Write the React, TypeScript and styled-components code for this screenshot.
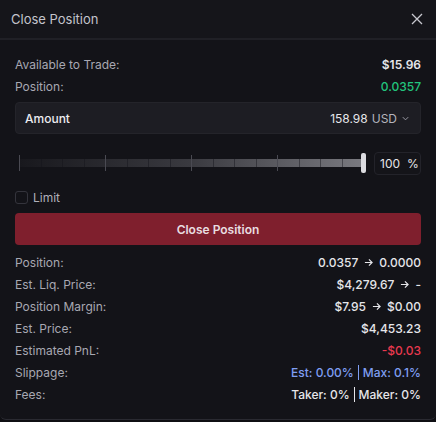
import React from 'react';
import styled, { createGlobalStyle } from 'styled-components';

const GlobalStyle = createGlobalStyle`
  html, body {
    margin: 0;
    padding: 0;
    background: #0f0f13;
  }
  * {
    box-sizing: border-box;
  }
`;

const Modal = styled.div`
  width: 436px;
  height: 420px;
  background: #131318;
  border-bottom: 1px solid #2a2a31;
  border-radius: 0 0 6px 6px;
  font-family: Inter, 'Noto Sans', sans-serif;
  font-size: 12px;
  color: #e4e4e8;
  display: flex;
  flex-direction: column;
`;

const Header = styled.div`
  height: 40px;
  padding: 0 11px 0 11px;
  display: flex;
  align-items: center;
  justify-content: space-between;
  background: #15151a;
  border-bottom: 2px solid #202026;
`;

const Title = styled.span`
  font-size: 13px;
  color: #c4c4cc;
`;

const CloseButton = styled.button`
  width: 16px;
  height: 16px;
  padding: 0;
  border: none;
  background: none;
  display: flex;
  align-items: center;
  justify-content: center;
  color: #c8c8cf;
`;

const Body = styled.div`
  padding: 13px 15px 0 15px;
  display: flex;
  flex-direction: column;
`;

const InfoRow = styled.div`
  height: 22px;
  display: flex;
  align-items: center;
  justify-content: space-between;
`;

const Label = styled.span`
  color: #a8a8b2;
`;

const Value = styled.span<{ $tone?: 'green' | 'red' | 'blue'; $strong?: boolean }>`
  display: flex;
  align-items: center;
  gap: 6px;
  font-weight: ${({ $strong }) => ($strong ? 600 : 500)};
  color: ${({ $tone }) =>
    $tone === 'green' ? '#22c47c' : $tone === 'red' ? '#e8394f' : $tone === 'blue' ? '#7f9ef2' : '#e6e6ea'};
`;

const Divider = styled.span`
  width: 1px;
  height: 15px;
  margin: 0 -2px;
  background: currentColor;
`;

const AmountBox = styled.div`
  margin-top: 5px;
  height: 32px;
  padding: 0 10px 0 9px;
  display: flex;
  align-items: center;
  justify-content: space-between;
  background: #1d1d23;
  border: 1px solid #24242a;
  border-radius: 4px;
`;

const AmountLabel = styled.span`
  font-size: 12px;
  font-weight: 500;
  color: #ececf0;
`;

const AmountValue = styled.span`
  display: flex;
  align-items: center;
  gap: 4px;
  color: #e6e6ea;
`;

const Unit = styled.span`
  color: #b4b4bc;
`;

const SliderRow = styled.div`
  margin-top: 17px;
  height: 24px;
  display: flex;
  align-items: center;
  gap: 11px;
`;

const Track = styled.div`
  position: relative;
  flex: 1;
  margin-left: 4px;
  height: 8px;
  background: linear-gradient(90deg, #18181d 0%, #3a3a40 50%, #7a7a80 100%);
`;

const Tick = styled.span<{ $major?: boolean }>`
  position: absolute;
  top: ${({ $major }) => ($major ? '-4px' : '0')};
  width: 1px;
  height: ${({ $major }) => ($major ? '16px' : '8px')};
  background: ${({ $major }) => ($major ? '#4a4a52' : 'rgba(20,20,26,0.45)')};
`;

const Thumb = styled.span`
  position: absolute;
  right: -3px;
  top: -6px;
  width: 5px;
  height: 20px;
  border-radius: 2px;
  background: #dcdce0;
`;

const PercentBox = styled.div`
  width: 47px;
  height: 23px;
  padding: 0 6px 0 5px;
  display: flex;
  align-items: center;
  gap: 7px;
  background: #141419;
  border: 1px solid #23232a;
  border-radius: 4px;
  color: #e6e6ea;
  font-size: 12px;
`;

const LimitRow = styled.label`
  margin-top: 15px;
  display: flex;
  align-items: center;
  gap: 5px;
  color: #b0b0ba;
`;

const Checkbox = styled.span`
  width: 13px;
  height: 13px;
  border: 1px solid #34343c;
  border-radius: 3px;
`;

const SubmitButton = styled.button`
  margin: 8px 0 6px;
  height: 32px;
  border: none;
  border-radius: 4px;
  background: #7f1f2d;
  color: #e8dde0;
  font-family: inherit;
  font-size: 12px;
  font-weight: 600;
`;

const Arrow = () => (
  <svg width="9" height="9" viewBox="0 0 10 10" fill="none" stroke="currentColor" strokeWidth="1.3">
    <path d="M1 5h8M5.5 1.5L9 5l-3.5 3.5" />
  </svg>
);

const ticks = Array.from({ length: 17 }, (_, i) => i);

const details: { label: string; value: React.ReactNode; tone?: 'red' | 'blue' }[] = [
  { label: 'Position:', value: <>0.0357 <Arrow /> 0.0000</> },
  { label: 'Est. Liq. Price:', value: <>$4,279.67 <Arrow /> -</> },
  { label: 'Position Margin:', value: <>$7.95 <Arrow /> $0.00</> },
  { label: 'Est. Price:', value: '$4,453.23' },
  { label: 'Estimated PnL:', value: '-$0.03', tone: 'red' },
  { label: 'Slippage:', value: <>Est: 0.00% <Divider /> Max: 0.1%</>, tone: 'blue' },
  { label: 'Fees:', value: <>Taker: 0% <Divider /> Maker: 0%</> },
];

export default function App() {
  return (
    <>
      <GlobalStyle />
      <Modal>
        <Header>
          <Title>Close Position</Title>
          <CloseButton aria-label="Close">
            <svg width="12" height="12" viewBox="0 0 12 12" stroke="currentColor" strokeWidth="1.3">
              <path d="M1 1l10 10M11 1L1 11" />
            </svg>
          </CloseButton>
        </Header>
        <Body>
          <InfoRow>
            <Label>Available to Trade:</Label>
            <Value $strong>$15.96</Value>
          </InfoRow>
          <InfoRow>
            <Label>Position:</Label>
            <Value $tone="green">0.0357</Value>
          </InfoRow>
          <AmountBox>
            <AmountLabel>Amount</AmountLabel>
            <AmountValue>
              158.98 <Unit>USD</Unit>
              <svg width="9" height="9" viewBox="0 0 10 10" fill="none" stroke="#9a9aa4" strokeWidth="1.1">
                <path d="M2 3.5l3 3 3-3" />
              </svg>
            </AmountValue>
          </AmountBox>
          <SliderRow>
            <Track>
              {ticks.map((i) => (
                <Tick key={i} $major={i % 4 === 0 && i < 16} style={{ left: `${(i / 16) * 100}%` }} />
              ))}
              <Thumb />
            </Track>
            <PercentBox>
              <span>100</span>
              <span>%</span>
            </PercentBox>
          </SliderRow>
          <LimitRow>
            <Checkbox />
            Limit
          </LimitRow>
          <SubmitButton>Close Position</SubmitButton>
          {details.map((d) => (
            <InfoRow key={d.label}>
              <Label>{d.label}</Label>
              <Value $tone={d.tone}>{d.value}</Value>
            </InfoRow>
          ))}
        </Body>
      </Modal>
    </>
  );
}
